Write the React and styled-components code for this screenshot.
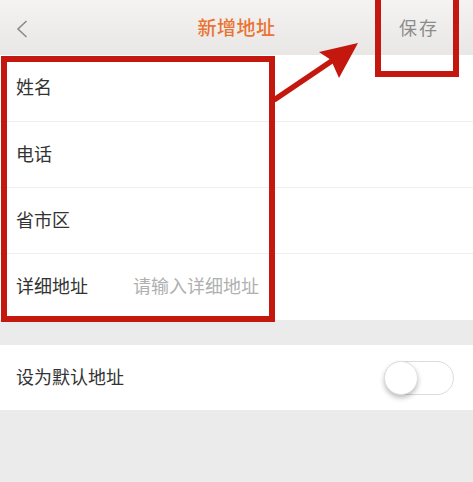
import React from "react";
import styled, { createGlobalStyle } from "styled-components";

const GlobalStyle = createGlobalStyle`
  html, body {
    margin: 0;
    padding: 0;
    background: #ebebeb;
    font-family: "Noto Sans CJK SC", "Noto Sans", sans-serif;
  }
`;

const fields = [
  { label: "姓名" },
  { label: "电话" },
  { label: "省市区" },
  { label: "详细地址", placeholder: "请输入详细地址" },
];

export default function App() {
  return (
    <Page>
      <GlobalStyle />
      <Header>
        <Back>
          <svg width="12" height="18" viewBox="0 0 12 18">
            <path d="M10.5 1 L2 9 L10.5 17" fill="none" stroke="#8a8a8a" strokeWidth="1.6" />
          </svg>
        </Back>
        <Title>新增地址</Title>
        <Save>保存</Save>
      </Header>

      <Form>
        {fields.map((f) => (
          <Row key={f.label}>
            <Label>{f.label}</Label>
            {f.placeholder && <Placeholder>{f.placeholder}</Placeholder>}
          </Row>
        ))}
      </Form>

      <DefaultRow>
        <Label>设为默认地址</Label>
        <Switch>
          <Knob />
        </Switch>
      </DefaultRow>

      <FormMark />
      <SaveMark />
      <Arrow width="473" height="130" viewBox="0 0 473 130">
        <line x1="274" y1="100" x2="345" y2="52" stroke="#c4170e" strokeWidth="5.5" />
        <polygon points="358,43 319,52 331,60 339,78" fill="#c4170e" />
      </Arrow>
    </Page>
  );
}

const Page = styled.div`
  position: relative;
  width: 473px;
  min-height: 482px;
  background: #ebebeb;
`;

const Header = styled.div`
  height: 55px;
  display: grid;
  grid-template-columns: 1fr auto 1fr;
  align-items: center;
  background: linear-gradient(#f4f3f1, #e8e7e5);
`;

const Back = styled.div`
  padding-left: 16px;
  display: flex;
  align-items: center;
  padding-top: 2px;
`;

const Title = styled.div`
  font-size: 19px;
  font-weight: 500;
  color: #ea7433;
  letter-spacing: 0.5px;
  padding-bottom: 2px;
`;

const Save = styled.div`
  justify-self: end;
  width: 72px;
  margin-right: 18px;
  padding-left: 4px;
  padding-bottom: 2px;
  text-align: center;
  font-size: 18px;
  color: #8c8c8c;
  letter-spacing: 2px;
`;

const Form = styled.div`
  background: #fff;
  padding-bottom: 1px;
  margin-bottom: 25px;
`;

const Row = styled.div`
  box-sizing: border-box;
  height: 66px;
  display: flex;
  align-items: center;
  padding: 0 0 4px 16px;
  border-top: 1px solid #efefef;

  &:first-child {
    border-top: none;
  }
`;

const Label = styled.span`
  width: 117px;
  font-size: 18px;
  color: #333;
`;

const Placeholder = styled.span`
  font-size: 18px;
  color: #b0b0b0;
`;

const DefaultRow = styled.div`
  box-sizing: border-box;
  height: 65px;
  display: flex;
  align-items: center;
  justify-content: space-between;
  padding: 0 19px 0 16px;
  background: #fff;

  ${Label} {
    padding-bottom: 3px;
  }
`;

const Switch = styled.div`
  position: relative;
  width: 68px;
  height: 32px;
  border: 1px solid #dcdcdc;
  border-radius: 17px;
  background: #fff;
`;

const Knob = styled.div`
  position: absolute;
  left: -1px;
  top: -1px;
  width: 34px;
  height: 34px;
  border-radius: 50%;
  background: #fff;
  border: 1px solid #e0e0e0;
  box-sizing: border-box;
  box-shadow: 0 3px 5px rgba(0, 0, 0, 0.25);
`;

const FormMark = styled.div`
  position: absolute;
  left: 1px;
  top: 56px;
  width: 262px;
  height: 254px;
  border: 6px solid #c4170e;
`;

const SaveMark = styled.div`
  position: absolute;
  left: 375px;
  top: -6px;
  width: 72px;
  height: 71px;
  border: 6px solid #c4170e;
`;

const Arrow = styled.svg`
  position: absolute;
  left: 0;
  top: 0;
`;
